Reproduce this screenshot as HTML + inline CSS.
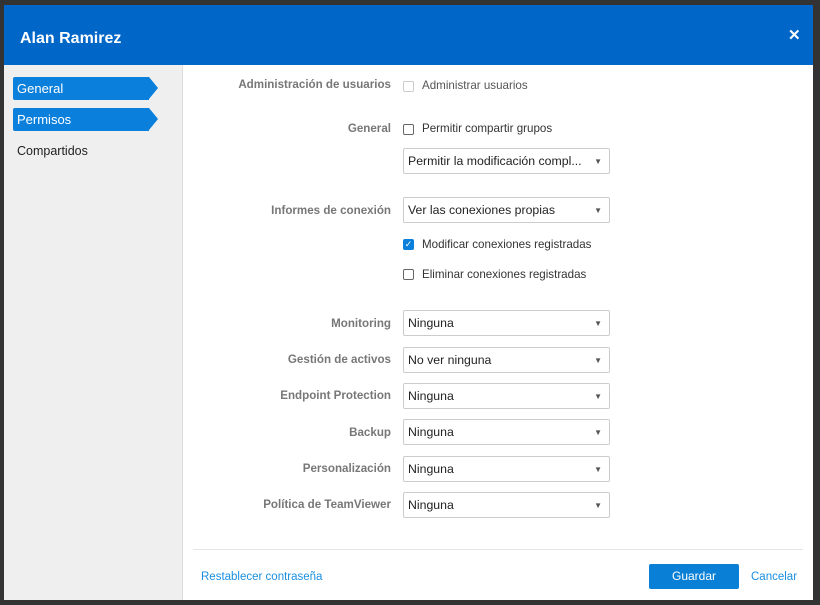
<!DOCTYPE html>
<html><head><meta charset="utf-8"><style>
*{box-sizing:border-box;margin:0;padding:0}
body{width:820px;height:605px;background:#333;position:relative;overflow:hidden;font-family:"Liberation Sans",sans-serif;font-size:12px;color:#333}
.modal{position:absolute;left:4px;top:5px;width:809px;height:595px;background:#fff}
.hdr{position:absolute;left:0;top:0;width:809px;height:60px;background:#0066c8}
.hdr h1{position:absolute;left:16px;top:25px;font-size:16px;color:#fff;font-weight:bold}
.x{position:absolute;left:784px;top:21px;color:#fff;font-size:15px;font-weight:bold}
.side{position:absolute;left:0;top:60px;width:179px;height:535px;background:#efefef;border-right:1px solid #ddd}
.tab{position:absolute;left:9px;width:136px;height:23px;background:#0a7fdc;color:#fff;font-size:13px;padding:4px 0 0 4px;border-radius:2px 0 0 2px}
.tab:after{content:"";position:absolute;right:-9px;top:0;border-left:9px solid #0a7fdc;border-top:11.5px solid transparent;border-bottom:11.5px solid transparent}
.lbl{position:absolute;right:422px;font-weight:bold;color:#777;font-size:11.6px;white-space:nowrap}
.cb{position:absolute;left:399px;width:11px;height:11px;border:1px solid #666;border-radius:2px;background:#fff}
.ct{position:absolute;left:418px;font-size:11.6px;color:#333}
.sel{position:absolute;left:399px;width:207px;height:26px;border:1px solid #ccc;border-radius:2px;font-size:12.3px;padding:5px 0 0 4px;color:#222}
.sel:after{content:"▼";position:absolute;right:7px;top:8px;font-size:8px;color:#555}
</style></head><body>
<div class="modal">
<div class="hdr"><h1>Alan Ramirez</h1><div class="x">✕</div></div>
<div class="side">
<div class="tab" style="top:12px">General</div>
<div class="tab" style="top:43px">Permisos</div>
<div style="position:absolute;left:13px;top:79px;font-size:12.5px;color:#222">Compartidos</div>
</div>
<div class="lbl" style="top:73px">Administración de usuarios</div>
<div class="cb" style="top:76px;border-color:#ccc"></div><div class="ct" style="top:74px;color:#555">Administrar usuarios</div>
<div class="lbl" style="top:117px">General</div>
<div class="cb" style="top:119px"></div><div class="ct" style="top:117px">Permitir compartir grupos</div>
<div class="sel" style="top:143px">Permitir la modificación compl...</div>
<div class="lbl" style="top:199px">Informes de conexión</div>
<div class="sel" style="top:192px">Ver las conexiones propias</div>
<div class="cb" style="top:234px;background:#0a7fdc;border-color:#0a7fdc;color:#fff;font-size:9px;line-height:9px;text-align:center">✓</div><div class="ct" style="top:233px">Modificar conexiones registradas</div>
<div class="cb" style="top:264px"></div><div class="ct" style="top:263px">Eliminar conexiones registradas</div>
<div class="lbl" style="top:312px">Monitoring</div><div class="sel" style="top:305px">Ninguna</div>
<div class="lbl" style="top:348px">Gestión de activos</div><div class="sel" style="top:342px">No ver ninguna</div>
<div class="lbl" style="top:384px">Endpoint Protection</div><div class="sel" style="top:378px">Ninguna</div>
<div class="lbl" style="top:421px">Backup</div><div class="sel" style="top:414px">Ninguna</div>
<div class="lbl" style="top:457px">Personalización</div><div class="sel" style="top:451px">Ninguna</div>
<div class="lbl" style="top:493px">Política de TeamViewer</div><div class="sel" style="top:487px">Ninguna</div>
<div style="position:absolute;left:189px;top:544px;width:610px;height:1px;background:#e5e5e5"></div>
<div style="position:absolute;left:197px;top:566px;color:#1a8fe0;font-size:11.5px">Restablecer contraseña</div>
<div style="position:absolute;left:645px;top:559px;width:90px;height:25px;background:#0a7fd6;border-radius:2px;color:#fff;text-align:center;line-height:25px;font-size:12px">Guardar</div>
<div style="position:absolute;left:747px;top:566px;color:#1a8fe0;font-size:11.5px">Cancelar</div>
</div>
</body></html>
